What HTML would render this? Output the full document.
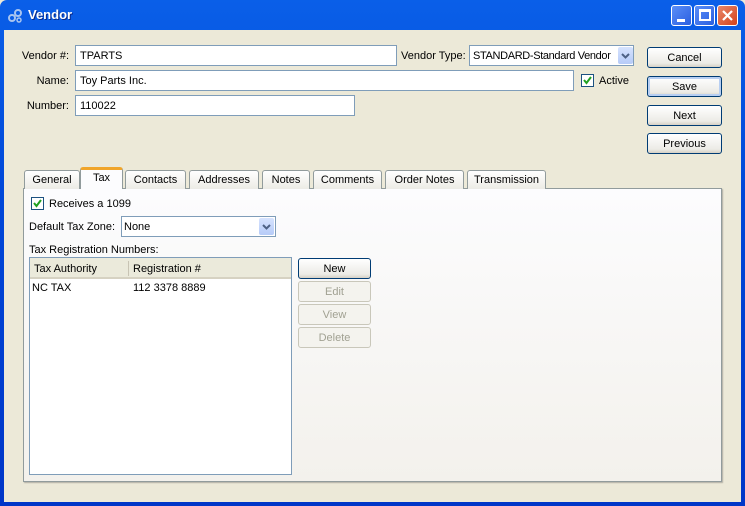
<!DOCTYPE html>
<html><head><style>
*{box-sizing:border-box;margin:0;padding:0}
body{width:745px;height:506px;position:relative;overflow:hidden;font-family:"Liberation Sans",sans-serif;font-size:11px;color:#000;background:#ece9d8}
.a{position:absolute}
.win{left:0;top:0;width:745px;height:506px;background:linear-gradient(#0a5fe8,#0047d8 40%,#0036c8);border-radius:7px 7px 0 0}
.body{left:4px;top:30px;width:737px;height:472px;background:#ece9d8}
.title{left:28px;top:7px;color:#fff;font-weight:bold;font-size:13px;text-shadow:1px 1px #0a2a8a}
.tb{top:5px;width:21px;height:21px;border:1px solid #fff;border-radius:3px;background:linear-gradient(135deg,#5a8ef8,#2a5fe0)}
.lbl{text-align:right}
.inp{background:#fff;border:1px solid #7f9db9;height:21px;padding:4px 4px 0}
.btn{border:1px solid #003c74;border-radius:3px;background:linear-gradient(#fff,#ecebe6 80%,#d6d0c5);text-align:center;height:21px;line-height:20px}
.dis{border-color:#c9c7ba;color:#a1a192;background:#f4f3ee}
.tab{top:170px;height:19px;border:1px solid #919b9c;border-bottom:none;border-radius:3px 3px 0 0;background:linear-gradient(#fff,#ecebe5);text-align:center;line-height:19px}
.chk{width:13px;height:13px;border:1px solid #1c5180;background:#fff}
.dd{width:15px;height:17px;background:linear-gradient(#d6e3fe,#b6cbf8);border-radius:2px}
</style></head><body>
<div class="a win"></div>
<div class="a body"></div>
<svg class="a" style="left:7px;top:8px" width="16" height="16"><circle cx="5" cy="10" r="3" fill="none" stroke="#a8c4f0" stroke-width="2"/><circle cx="11" cy="5" r="3" fill="none" stroke="#a8c4f0" stroke-width="2"/><circle cx="12" cy="12" r="2" fill="none" stroke="#a8c4f0" stroke-width="1.5"/></svg>
<div class="a title">Vendor</div>
<div class="a tb" style="left:671px"><div class="a" style="left:5px;top:13px;width:8px;height:3px;background:#fff"></div></div>
<div class="a tb" style="left:694px"><div class="a" style="left:4px;top:3px;width:12px;height:12px;border:2px solid #fff;border-top-width:3px"></div></div>
<div class="a tb" style="left:717px;background:linear-gradient(135deg,#e8886a,#d5421c)"><svg class="a" style="left:4px;top:4px" width="11" height="11"><path d="M1 1L10 10M10 1L1 10" stroke="#fff" stroke-width="2.2"/></svg></div>

<div class="a lbl" style="left:10px;top:50px;width:59px">Vendor #:</div>
<div class="a inp" style="left:75px;top:45px;width:322px">TPARTS</div>
<div class="a" style="left:401px;top:50px">Vendor Type:</div>
<div class="a inp" style="left:469px;top:45px;width:165px;letter-spacing:-0.35px;padding-left:3px">STANDARD-Standard Vendor</div>
<div class="a dd" style="left:618px;top:47px"><svg width="15" height="17"><path d="M4 7L7.5 10.5L11 7" fill="none" stroke="#4d6185" stroke-width="2"/></svg></div>
<div class="a lbl" style="left:10px;top:75px;width:59px">Name:</div>
<div class="a inp" style="left:75px;top:70px;width:499px">Toy Parts Inc.</div>
<div class="a chk" style="left:581px;top:74px"><svg width="11" height="11"><path d="M2 5L4.5 8L9 2" fill="none" stroke="#21a121" stroke-width="2"/></svg></div>
<div class="a" style="left:599px;top:75px">Active</div>
<div class="a lbl" style="left:10px;top:100px;width:59px">Number:</div>
<div class="a inp" style="left:75px;top:95px;width:280px">110022</div>

<div class="a btn" style="left:647px;top:47px;width:75px">Cancel</div>
<div class="a btn" style="left:647px;top:76px;width:75px;box-shadow:inset 0 0 0 2px #b8cff2">Save</div>
<div class="a btn" style="left:647px;top:105px;width:75px">Next</div>
<div class="a btn" style="left:647px;top:133px;width:75px">Previous</div>

<div class="a" style="left:23px;top:188px;width:699px;height:294px;border:1px solid #919b9c;background:linear-gradient(#fcfcfe,#f3f1ec);box-shadow:1px 1px 1px #b0aea3"></div>
<div class="a tab" style="left:24px;width:56px">General</div>
<div class="a tab" style="left:80px;width:43px;top:167px;height:22px;background:#fcfcfe;border-top:3px solid #f0a52a;line-height:17px">Tax</div>
<div class="a tab" style="left:125px;width:61px">Contacts</div>
<div class="a tab" style="left:189px;width:70px">Addresses</div>
<div class="a tab" style="left:262px;width:48px">Notes</div>
<div class="a tab" style="left:313px;width:69px">Comments</div>
<div class="a tab" style="left:385px;width:79px">Order Notes</div>
<div class="a tab" style="left:467px;width:79px">Transmission</div>

<div class="a chk" style="left:31px;top:197px"><svg width="11" height="11"><path d="M2 5L4.5 8L9 2" fill="none" stroke="#21a121" stroke-width="2"/></svg></div>
<div class="a" style="left:49px;top:198px">Receives a 1099</div>
<div class="a" style="left:29px;top:221px">Default Tax Zone:</div>
<div class="a inp" style="left:121px;top:216px;width:155px;padding-left:2px">None</div>
<div class="a dd" style="left:259px;top:218px"><svg width="15" height="17"><path d="M4 7L7.5 10.5L11 7" fill="none" stroke="#4d6185" stroke-width="2"/></svg></div>
<div class="a" style="left:29px;top:244px">Tax Registration Numbers:</div>
<div class="a" style="left:29px;top:257px;width:263px;height:218px;border:1px solid #7f9db9;background:#fff"></div>
<div class="a" style="left:30px;top:258px;width:261px;height:21px;background:#ebeadb;border-bottom:2px solid #d6d2c2"></div>
<div class="a" style="left:128px;top:261px;width:1px;height:15px;background:#c8c4b4"></div>
<div class="a" style="left:34px;top:263px">Tax Authority</div>
<div class="a" style="left:133px;top:263px">Registration #</div>
<div class="a" style="left:32px;top:282px">NC TAX</div>
<div class="a" style="left:133px;top:282px">112 3378 8889</div>

<div class="a btn" style="left:298px;top:258px;width:73px">New</div>
<div class="a btn dis" style="left:298px;top:281px;width:73px">Edit</div>
<div class="a btn dis" style="left:298px;top:304px;width:73px">View</div>
<div class="a btn dis" style="left:298px;top:327px;width:73px">Delete</div>
</body></html>
